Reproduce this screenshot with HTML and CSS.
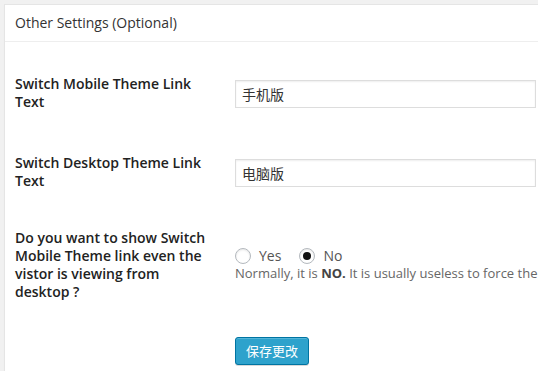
FILE: index.html
```html
<!DOCTYPE html>
<html lang="en">
<head>
<meta charset="utf-8">
<title>Other Settings</title>
<link rel="stylesheet" href="styles.css">
</head>
<body>
<div class="postbox">
  <h3 class="hndle">Other Settings (Optional)</h3>
  <div class="inside">
    <div class="row row-text">
      <div class="th">Switch Mobile Theme Link Text</div>
      <div class="td"><input class="regular-text" type="text" value="手机版"></div>
    </div>
    <div class="row row-text">
      <div class="th">Switch Desktop Theme Link Text</div>
      <div class="td"><input class="regular-text" type="text" value="电脑版"></div>
    </div>
    <div class="row row-choice">
      <div class="th">Do you want to show Switch Mobile Theme link even the vistor is viewing from desktop ?</div>
      <div class="td">
        <div class="choices">
          <label class="choice"><span class="radio"></span>Yes</label>
          <label class="choice"><span class="radio checked"></span>No</label>
        </div>
        <p class="description">Normally, it is <strong>NO.</strong> It is usually useless to force the mobile theme link to show when the visitor is on a desktop browser.</p>
      </div>
    </div>
    <div class="submit">
      <button class="button-primary" type="button">保存更改</button>
    </div>
  </div>
</div>
</body>
</html>
```
FILE: styles.css
```css
html {
  overflow: hidden;
}
body {
  margin: 0;
  padding: 4px 0 0 4px;
  background: #f1f1f1;
  font-family: "Open Sans", "Noto Sans CJK SC", sans-serif;
  color: #444;
  width: 1000px;
}
.postbox {
  width: 900px;
  background: #fff;
  border: 1px solid #e5e5e5;
  box-shadow: 0 1px 1px rgba(0,0,0,.04);
}
.hndle {
  margin: 0;
  padding: 8px 10px;
  font-size: 14px;
  font-weight: 400;
  line-height: 19.6px;
  color: #333;
  border-bottom: 1px solid #eee;
}
.inside {
  padding: 19px 10px 40px;
}
.row {
  display: flex;
}
.th {
  width: 200px;
  padding-right: 10px;
  font-size: 14px;
  font-weight: 600;
  line-height: 18px;
  color: #222;
  flex: none;
}
.td {
  padding-left: 10px;
}
.row-text .th {
  padding-top: 14px;
  padding-bottom: 29px;
}
.row-text .td {
  padding-top: 19px;
}
.row-choice .th {
  padding-top: 10px;
  padding-bottom: 20px;
}
.row-choice .td {
  padding-top: 29px;
}
.regular-text {
  box-sizing: border-box;
  width: 301px;
  height: 28px;
  margin: 0;
  padding: 3px 6px;
  border: 1px solid #ddd;
  box-shadow: inset 0 1px 2px rgba(0,0,0,.07);
  font-family: "Open Sans", "Noto Sans CJK SC", sans-serif;
  font-size: 14px;
  color: #333;
  outline: none;
}
.choices {
  display: flex;
  gap: 18px;
  height: 16px;
}
.choice {
  display: flex;
  align-items: center;
  gap: 8px;
  font-size: 14px;
  line-height: 16px;
  color: #555;
}
.radio {
  box-sizing: border-box;
  width: 16px;
  height: 16px;
  border: 1px solid #b4b9be;
  border-radius: 50%;
  box-shadow: inset 0 1px 2px rgba(0,0,0,.1);
  display: flex;
  align-items: center;
  justify-content: center;
}
.radio.checked::before {
  content: "";
  width: 8px;
  height: 8px;
  border-radius: 50%;
  background: #111;
}
.description {
  margin: 0;
  font-size: 13px;
  line-height: 19.5px;
  color: #666;
  white-space: nowrap;
}
.description strong {
  color: #444;
  font-weight: 700;
}
.submit {
  padding: 16px 0 0 220px;
}
.button-primary {
  height: 28px;
  margin: 0;
  padding: 0 10px;
  border: 1px solid #0074a2;
  border-radius: 3px;
  background: #2ea2cc;
  box-shadow: inset 0 1px 0 rgba(120,200,230,.5), 0 1px 0 rgba(0,0,0,.15);
  color: #fff;
  font-family: "Open Sans", "Noto Sans CJK SC", sans-serif;
  font-size: 13px;
  line-height: 26px;
}
```
